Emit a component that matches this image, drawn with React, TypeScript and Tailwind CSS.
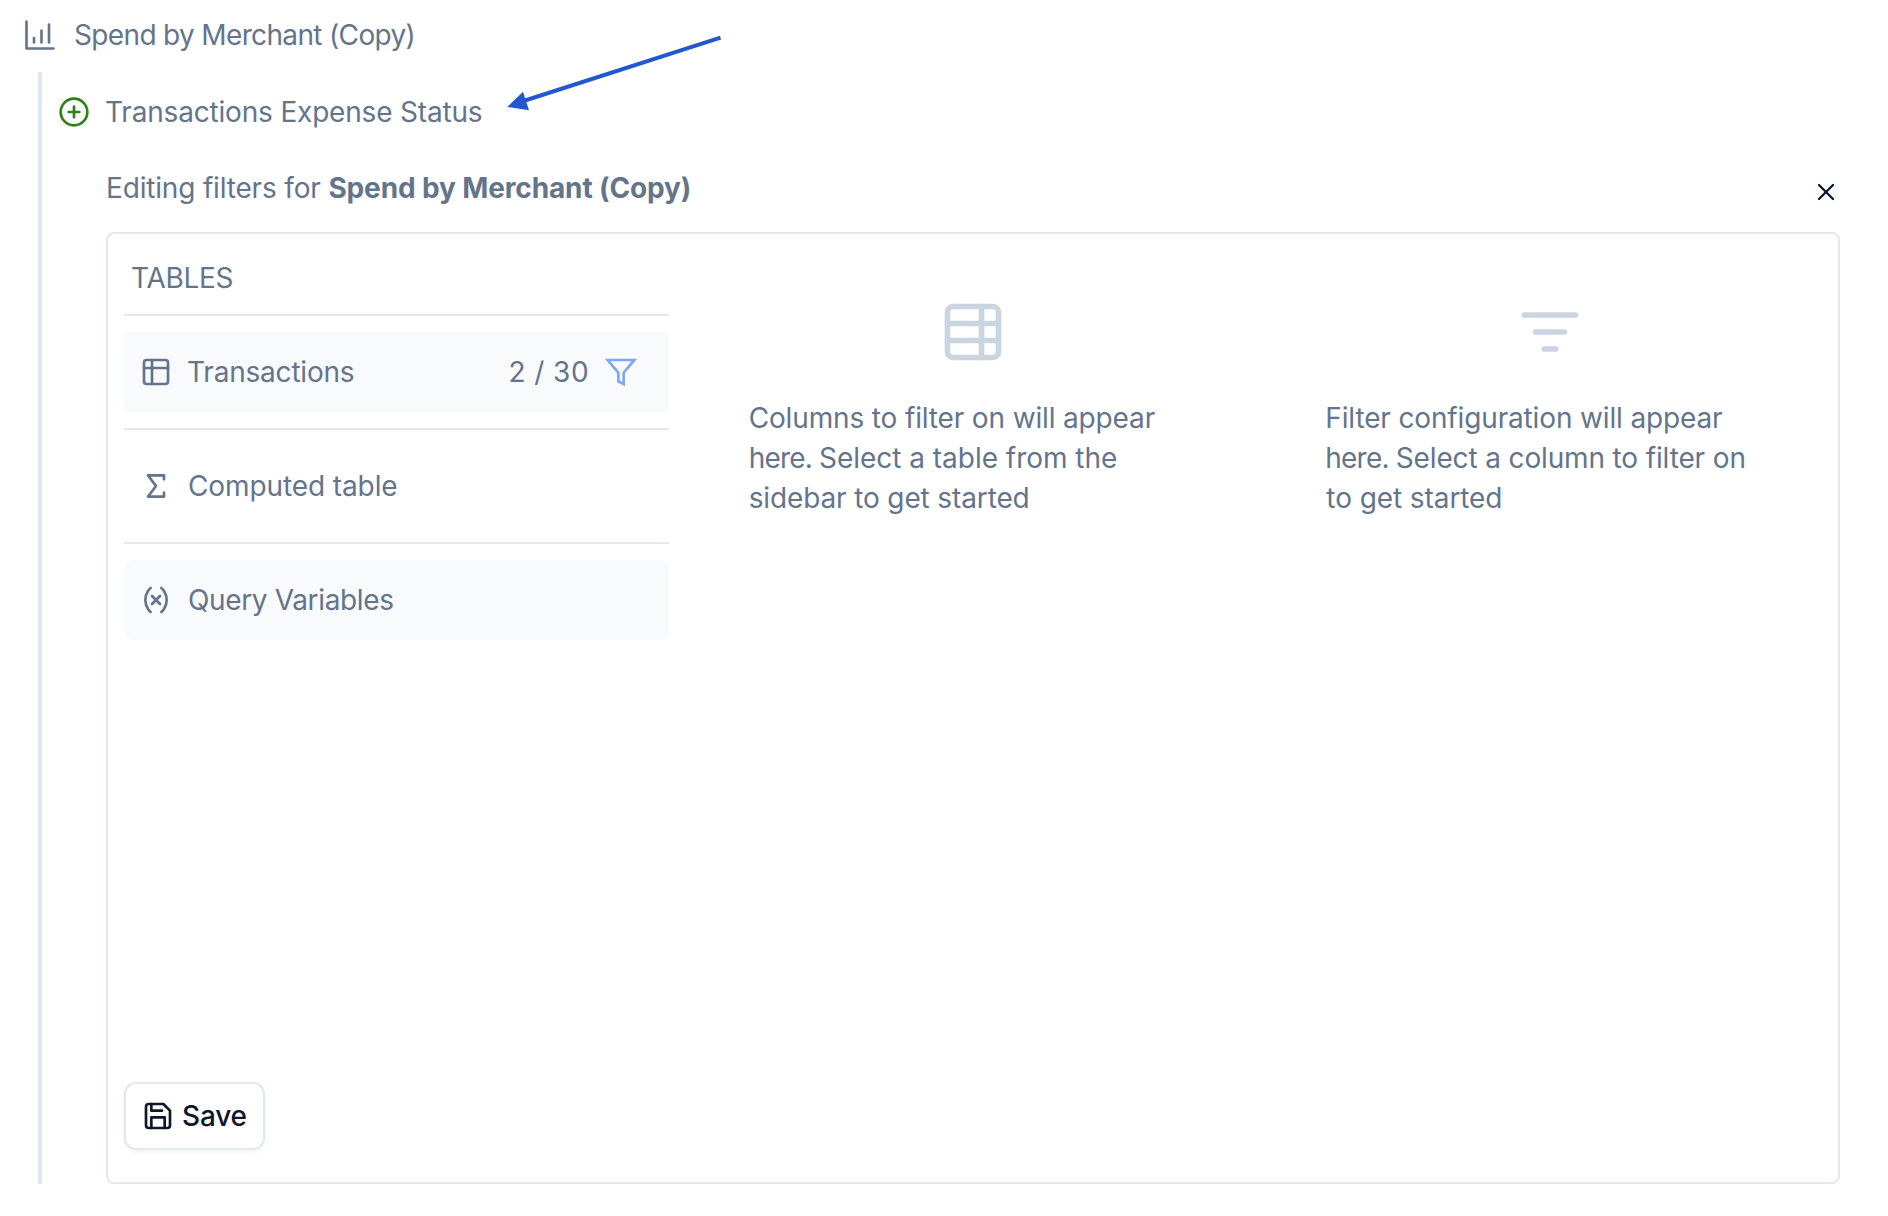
import type { ReactNode } from "react";

type IconProps = { className: string; strokeWidth?: number; children: ReactNode };

function Icon({ className, strokeWidth = 2, children }: IconProps) {
  return (
    <svg
      viewBox="0 0 24 24"
      fill="none"
      stroke="currentColor"
      strokeWidth={strokeWidth}
      strokeLinecap="round"
      strokeLinejoin="round"
      className={`shrink-0 ${className}`}
    >
      {children}
    </svg>
  );
}

type RowProps = { icon: ReactNode; label: string; labelClass: string; filled?: boolean; children?: ReactNode };

function SidebarRow({ icon, label, labelClass, filled, children }: RowProps) {
  return (
    <div className={`flex h-20 items-center gap-4 rounded-lg pl-4 pr-8 ${filled ? "bg-[#f8fafc]" : ""}`}>
      {icon}
      <span className={`grow ${labelClass}`}>{label}</span>
      {children}
    </div>
  );
}

function Divider() {
  return <div className="h-0.5 bg-[#e5e7eb]" />;
}

export default function App() {
  return (
    <div className="relative h-[1216px] w-[1888px] overflow-hidden bg-white pt-3.5 font-['Inter',sans-serif] text-[28px] leading-10 text-[#64748b]">
      <header className="flex h-10 items-center gap-4 pl-[22px]">
        <Icon className="mt-0.5 size-9" strokeWidth={1.75}>
          <path d="M3 3v18h18" />
          <path d="M13 17V9" />
          <path d="M18 17V5" />
          <path d="M8 17v-3" />
        </Icon>
        <span className="mt-0.5 tracking-[-0.65px]">Spend by Merchant (Copy)</span>
      </header>

      <div className="ml-[38px] mt-[18px] h-[1112px] border-l-4 border-[#e2e8f0] pl-4 pt-5">
        <div className="flex items-center gap-4">
          <Icon className="size-8 text-[#2f8019]">
            <circle cx="12" cy="12" r="10" />
            <path d="M8 12h8" />
            <path d="M12 8v8" />
          </Icon>
          <span className="-ml-px tracking-[-0.18px]">Transactions Expense Status</span>
        </div>

        <div className="ml-12 mt-9 flex w-[1734px] items-center justify-between">
          <p className="tracking-[-0.17px]">
            Editing filters for <b className="tracking-[-0.13px]">Spend by Merchant (Copy)</b>
          </p>
          <button className="mt-2 h-7 text-[#0f172a]" aria-label="Close">
            <Icon className="size-7">
              <path d="M18 6 6 18" />
              <path d="m6 6 12 12" />
            </Icon>
          </button>
        </div>

        <section className="ml-12 mt-6 grid h-[952px] w-[1734px] grid-cols-3 rounded-lg border-2 border-[#e2e8f0]">
          <aside className="flex flex-col p-4">
            <h2 className="mb-4 mt-2 h-10 pl-[7px] tracking-[-0.3px]">TABLES</h2>
            <Divider />
            <div className="py-4">
              <SidebarRow
                filled
                label="Transactions"
                labelClass="-ml-px tracking-[-0.2px]"
                icon={
                  <Icon className="size-8">
                    <rect x="3" y="3" width="18" height="18" rx="2" />
                    <path d="M9 3v18" />
                    <path d="M3 9h18" />
                  </Icon>
                }
              >
                <span className="-mr-px tracking-[0.86px] [word-spacing:-1px]">2 / 30</span>
                <Icon className="size-8 text-[#7ba6f9]">
                  <path strokeLinejoin="miter" d="M22 3H2l8 9.46V19l4 2v-8.54z" />
                </Icon>
              </SidebarRow>
            </div>
            <Divider />
            <div className="py-4">
              <SidebarRow
                label="Computed table"
                labelClass="tracking-[-0.1px]"
                icon={
                  <Icon className="size-8">
                    <path d="M18 7V4H6l6 8-6 8h12v-3" />
                  </Icon>
                }
              />
            </div>
            <Divider />
            <div className="py-4">
              <SidebarRow
                filled
                label="Query Variables"
                labelClass="tracking-[-0.36px]"
                icon={
                  <Icon className="size-8">
                    <path d="M8 21s-4-3-4-9 4-9 4-9" />
                    <path d="M16 3s4 3 4 9-4 9-4 9" />
                    <path d="m15 9-6 6" />
                    <path d="m9 9 6 6" />
                  </Icon>
                }
              />
            </div>
            <button className="mb-4 mt-auto flex h-[68px] items-center gap-2 self-start rounded-xl border-2 border-[#e2e8f0] bg-white px-4 font-medium tracking-[-0.2px] text-[#0f172a] shadow-[0_2px_4px_rgba(0,0,0,0.05)]">
              <Icon className="size-8">
                <path d="M19 21H5a2 2 0 0 1-2-2V5a2 2 0 0 1 2-2h11l5 5v11a2 2 0 0 1-2 2z" />
                <path d="M17 21v-8H7v8" />
                <path d="M7 3v5h8" />
              </Icon>
              Save
            </button>
          </aside>

          <div className="flex flex-col items-center gap-8 px-16 pt-16">
            <Icon className="size-[68px] text-[#cbd5e1]">
              <rect x="3" y="3" width="18" height="18" rx="2" />
              <path d="M15 3v18" />
              <path d="M3 9h18" />
              <path d="M3 15h18" />
            </Icon>
            <p className="w-full whitespace-nowrap">
              <span className="block tracking-[-0.145px]">Columns to filter on will appear</span>
              <span className="block tracking-[-0.03px]">
                <span className="tracking-[-0.8px]">here. </span>Select a table from the
              </span>
              <span className="block tracking-[-0.13px]">sidebar to get started</span>
            </p>
          </div>

          <div className="flex flex-col items-center gap-8 px-16 pt-16">
            <Icon className="size-[68px] text-[#cbd5e1]">
              <path d="M3 6h18" />
              <path d="M7 12h10" />
              <path d="M10 18h4" />
            </Icon>
            <p className="w-full whitespace-nowrap">
              <span className="block tracking-[-0.145px]">Filter configuration will appear</span>
              <span className="block tracking-[-0.14px]">
                <span className="tracking-[-0.8px]">here. </span>Select a column to filter on
              </span>
              <span className="block pl-px tracking-[-0.08px]">to get started</span>
            </p>
          </div>
        </section>
      </div>

      <svg viewBox="0 0 220 80" className="absolute left-[505px] top-[35px] h-20 w-[220px]" fill="#2257d0">
        <path d="M215.5 2.7 20 65.5" stroke="#2257d0" strokeWidth="4" />
        <path d="M2.3 72 18 56.7 24 75.3z" />
      </svg>
    </div>
  );
}
